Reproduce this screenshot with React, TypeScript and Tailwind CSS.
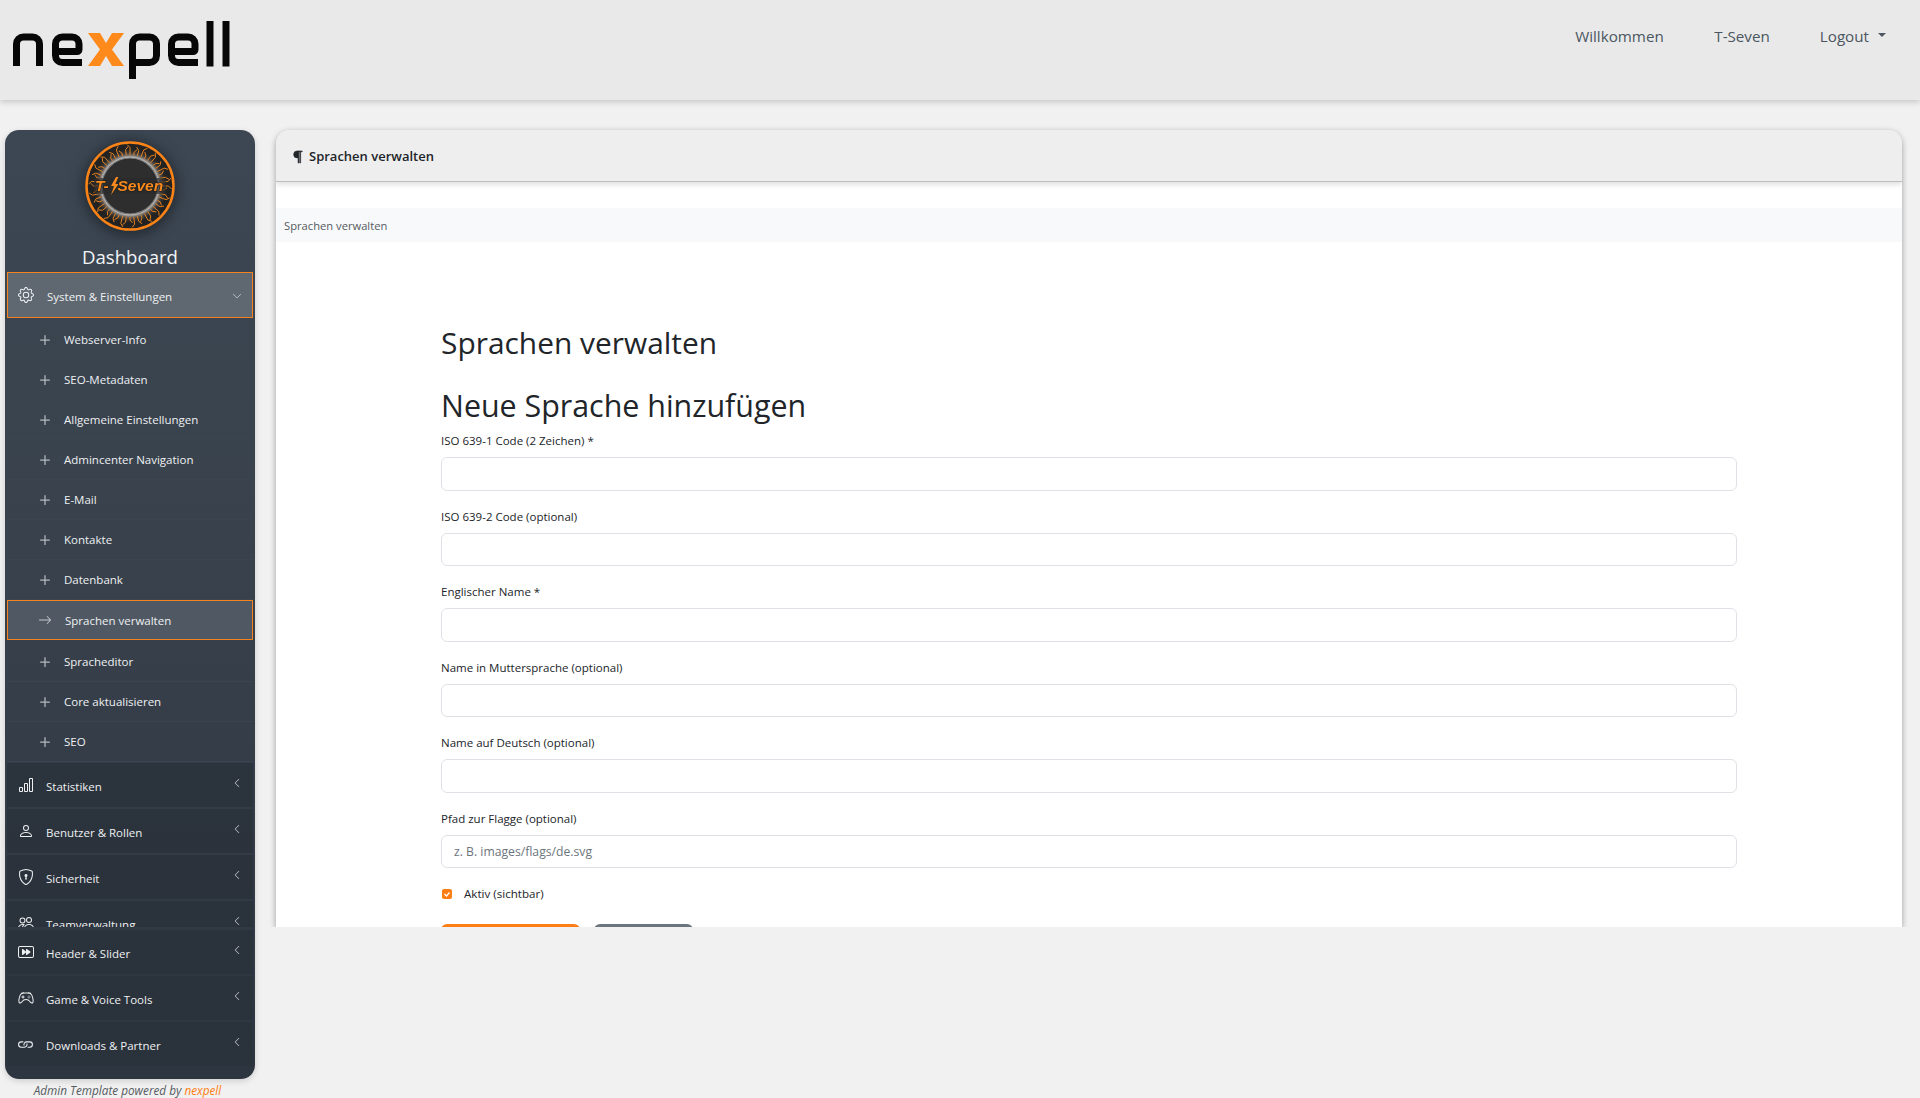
import type {ReactNode} from "react";
import {
  BsArrowRight,
  BsBarChart,
  BsChevronDown,
  BsChevronLeft,
  BsController,
  BsFastForwardBtn,
  BsGear,
  BsLink,
  BsParagraph,
  BsPeople,
  BsPerson,
  BsPlus,
  BsShieldLock
} from "react-icons/bs";

const subItems = ["Webserver-Info", "SEO-Metadaten", "Allgemeine Einstellungen", "Admincenter Navigation", "E-Mail", "Kontakte", "Datenbank"];
const subItemsAfter = ["Spracheditor", "Core aktualisieren", "SEO"];

const fields = [
  {label: "ISO 639-1 Code (2 Zeichen) *"},
  {label: "ISO 639-2 Code (optional)"},
  {label: "Englischer Name *"},
  {label: "Name in Muttersprache (optional)"},
  {label: "Name auf Deutsch (optional)"},
  {label: "Pfad zur Flagge (optional)", placeholder: "z. B. images/flags/de.svg"}
];

function NexpellLogo() {
  return (
    <svg width="230" height="84" viewBox="0 0 230 84" fill="none" className="shrink-0">
      <g stroke="#070707" strokeWidth="7">
        <path d="M16.5 66V44a7 7 0 0 1 7-7h9a7 7 0 0 1 7 7v22" />
        <path d="M82 62.500H62.500a7 7 0 0 1-7-7V44a7 7 0 0 1 7-7H72a7 7 0 0 1 7 7v5.500a2 2 0 0 1-2 2H56" />
        <path d="M132.500 79V44a7 7 0 0 1 7-7h10a7 7 0 0 1 7 7v11.500a7 7 0 0 1-7 7h-17" />
        <path d="M198 62.500H178.500a7 7 0 0 1-7-7V44a7 7 0 0 1 7-7H188a7 7 0 0 1 7 7v5.500a2 2 0 0 1-2 2H172" />
        <path d="M210 21v45.500" />
        <path d="M226 21v45.500" />
      </g>
      <path d="M88 33h12l6 10 6-10h12l-12 16.500L124 66h-12l-6-10-6 10H88l12-16.500z" fill="#ff8a1c" />
    </svg>
  );
}

function SevenLogo() {
  const spokes = Array.from({length: 52}, (_, i) => (i * Math.PI * 2) / 52);
  return (
    <svg width="90" height="90" viewBox="0 0 90 90" className="drop-shadow-[0_2px_8px_rgba(0,0,0,0.55)]">
      <defs>
        <radialGradient id="glow" cx="50%" cy="50%" r="50%">
          <stop offset="66%" stopColor="#ffffff" stopOpacity="0.9" />
          <stop offset="76%" stopColor="#c8b8a8" stopOpacity="0.3" />
          <stop offset="90%" stopColor="#1c1c1c" stopOpacity="0" />
        </radialGradient>
      </defs>
      <circle cx="45" cy="45" r="43.500" fill="#222222" stroke="#f98317" strokeWidth="2.500" />
      <circle cx="45" cy="45" r="42" fill="url(#glow)" />
      {spokes.map((a, i) => {
        const r1 = 31;
        const r2 = i % 3 === 0 ? 41.500 : i % 3 === 1 ? 37 : 39.500;
        const b = a + (i % 2 === 0 ? 0.07 : -0.07);
        return (
          <path
            key={i}
            d={`M${45 + r1 * Math.cos(a)} ${45 + r1 * Math.sin(a)}L${45 + (r2 - 3) * Math.cos(a)} ${45 + (r2 - 3) * Math.sin(a)}L${45 + r2 * Math.cos(b)} ${45 + r2 * Math.sin(b)}`}
            stroke="#f5891f"
            strokeWidth="0.9"
            fill="none"
          />
        );
      })}
      <circle cx="45" cy="45" r="28" fill="#2e2e2e" stroke="#777777" strokeWidth="1.200" />
      <rect x="9" y="37" width="72" height="16" rx="3" fill="#2a2a2a" opacity="0.65" />
      <text x="10" y="50" fill="#f98a1e" stroke="#1c1c1c" strokeWidth="1.200" paintOrder="stroke" fontFamily="'Liberation Sans', sans-serif" fontSize="15.500" fontStyle="italic" fontWeight="700">T-</text>
      <path d="M31 36l-5 9h3l-3 9 7.500-11h-3.200l3-7z" fill="#f98a1e" />
      <text x="32.500" y="50" fill="#f98a1e" stroke="#1c1c1c" strokeWidth="1.200" paintOrder="stroke" fontFamily="'Liberation Sans', sans-serif" fontSize="15.500" fontStyle="italic" fontWeight="700">Seven</text>
    </svg>
  );
}

function SubRow({label}: {label: string}) {
  return (
    <div className="flex h-10 items-center border-b border-[#3a4550] pl-[28px] text-[11.500px] text-[#eef0f2]">
      <BsPlus className="size-5 shrink-0 text-[#b4b9be]" />
      <span className="ml-[9px]">{label}</span>
    </div>
  );
}

function CategoryRow({icon, label}: {icon: ReactNode; label: string}) {
  return (
    <div className="flex h-11 shrink-0 items-center bg-[#2a323b]/90 pr-[11px] pl-[10px] text-[11.500px] text-[#eef0f2]">
      <span className="flex w-[17px] justify-center text-[#eef0f2]">{icon}</span>
      <span className="mt-1 ml-[12px] flex-1">{label}</span>
      <BsChevronLeft className="mb-1 size-[10px] text-[#c8ccd0]" />
    </div>
  );
}

function Sidebar() {
  return (
    <div className="flex w-[250px] shrink-0 flex-col">
      <aside className="h-[949px] rounded-[14px] bg-gradient-to-b from-[#3c4753] via-[#38414b] to-[#2d3640] px-[2px] shadow-[0_2px_6px_rgba(0,0,0,0.15)]">
        <div className="flex h-[797px] flex-col overflow-hidden">
          <div className="flex justify-center pt-[11px]">
            <SevenLogo />
          </div>
          <div className="mt-[13px] text-center text-[18.600px] leading-[26px] text-[#f2f4f6]">Dashboard</div>
          <div className="mt-[2px] flex h-[46px] shrink-0 items-center border border-[#f5811f] bg-[#5f6871] pr-[10px] pl-[10px] text-[11.500px] text-[#eef0f2]">
            <BsGear className="size-4 shrink-0" />
            <span className="mt-[4px] ml-[13px] flex-1">System &amp; Einstellungen</span>
            <BsChevronDown className="mt-[1px] size-[10px] text-[#d8dbde]" />
          </div>
          <div className="mt-[2px]">
            {subItems.map((label) => (
              <SubRow key={label} label={label} />
            ))}
            <div className="flex h-10 items-center border border-[#f5811f] bg-[#505963] pl-[30px] text-[11.500px] text-[#eef0f2]">
              <BsArrowRight className="size-[14px] shrink-0 text-[#c4c8cc]" />
              <span className="mt-[1px] ml-[13px]">Sprachen verwalten</span>
            </div>
            <div className="h-[2px]" />
            {subItemsAfter.map((label) => (
              <SubRow key={label} label={label} />
            ))}
          </div>
          <div className="mt-[1px] flex flex-col gap-[2px]">
            <CategoryRow icon={<BsBarChart className="size-4" />} label="Statistiken" />
            <CategoryRow icon={<BsPerson className="size-4" />} label="Benutzer &amp; Rollen" />
            <CategoryRow icon={<BsShieldLock className="size-4" />} label="Sicherheit" />
            <CategoryRow icon={<BsPeople className="size-4" />} label="Teamverwaltung" />
          </div>
        </div>
        <div className="mt-[3px] flex flex-col gap-[2px]">
          <CategoryRow icon={<BsFastForwardBtn className="size-4" />} label="Header &amp; Slider" />
          <CategoryRow icon={<BsController className="size-4" />} label="Game &amp; Voice Tools" />
          <CategoryRow icon={<BsLink className="size-[18px]" />} label="Downloads &amp; Partner" />
        </div>
      </aside>
      <p className="mt-[3px] pr-[5px] text-center text-[11.750px] leading-4 text-[#555b61] italic">
        Admin Template powered by <span className="text-[#fd7e14]">nexpell</span>
      </p>
    </div>
  );
}

function LanguageForm() {
  return (
    <div className="px-[165px] pt-[80px]">
      <h1 className="text-[29.900px] leading-[42px] text-[#212529]">Sprachen verwalten</h1>
      <h2 className="mt-[21px] text-[30.400px] leading-[42px] text-[#212529]">Neue Sprache hinzufügen</h2>
      <div className="mt-[1px] flex flex-col gap-[13px]">
        {fields.map((field) => (
          <div key={field.label}>
            <label className="block text-[11.500px] leading-[25px] text-[#212529]">{field.label}</label>
            <input
              readOnly
              placeholder={field.placeholder}
              className="mt-[4px] block h-[33.500px] w-full rounded-md border border-[#dee2e6] bg-white px-3 text-[12.200px] placeholder:text-[#6c757d]"
            />
          </div>
        ))}
      </div>
      <div className="mt-[16px] ml-[1px] flex h-5 items-center gap-3 text-[11.600px] text-[#212529]">
        <span className="flex size-[10px] items-center justify-center rounded-[2px] bg-[#fd7e14]">
          <svg width="8" height="8" viewBox="0 0 8 8" fill="none" stroke="#fff" strokeWidth="1.300"><path d="M1.500 4l2 2 3-3.500" /></svg>
        </span>
        <span>Aktiv (sichtbar)</span>
      </div>
      <div className="mt-[20px] flex gap-[14px]">
        <button className="h-[33px] w-[139px] rounded-md bg-[#fd7e14]" />
        <button className="h-[33px] w-[99px] rounded-md bg-[#6c757d]" />
      </div>
    </div>
  );
}

export default function App() {
  return (
    <div className="min-h-[1098px] overflow-hidden bg-[#f1f1f1] font-['Open_Sans',sans-serif]">
      <header className="flex h-[100px] items-start justify-between bg-[#e9e9e9] shadow-[0_2px_6px_rgba(0,0,0,0.18)]">
        <NexpellLogo />
        <nav className="mr-[34px] flex items-center pt-[24px] text-[15.200px] leading-6 text-[#4b5661]">
          <span>Willkommen</span>
          <span className="ml-[50.500px]">T-Seven</span>
          <span className="ml-[50px]">Logout</span>
          <span className="mb-[3px] ml-[9px] border-x-[4.500px] border-t-[4.500px] border-x-transparent border-t-[#4b5661]" />
        </nav>
      </header>
      <div className="flex gap-[21px] pt-[30px] pr-[18px] pl-[5px]">
        <Sidebar />
        <main className="h-[797px] flex-1 overflow-hidden rounded-t-[14px] bg-white shadow-[0_2px_6px_rgba(0,0,0,0.35)] [clip-path:inset(-12px_-12px_0_-12px)]">
          <div className="flex h-[52px] items-center gap-[4px] border-b border-[#bdbdbd] bg-[#eeeeee] px-[15px] pt-[3px] text-[13px] font-semibold text-[#212529] shadow-[0_2px_6px_rgba(0,0,0,0.15)]">
            <BsParagraph className="size-[14px] stroke-[0.6]" />
            <span>Sprachen verwalten</span>
          </div>
          <div className="mt-[26px] flex h-[34px] items-center bg-[#f8f9fa] px-[8px] pt-[2px] text-[11.200px] text-[#555b61]">Sprachen verwalten</div>
          <LanguageForm />
        </main>
      </div>
    </div>
  );
}
